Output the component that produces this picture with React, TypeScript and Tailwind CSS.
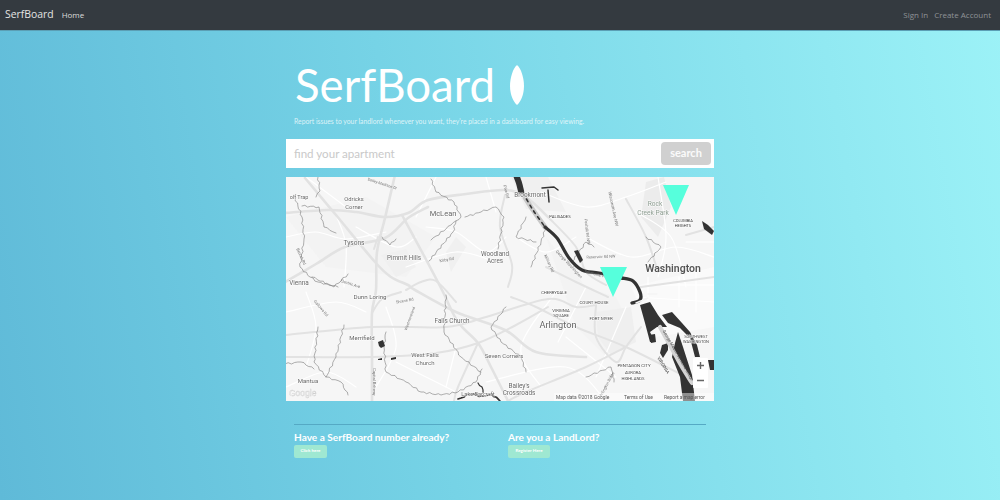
import React from "react";

function nums(d: string): [number, number][] {
  const n = (d.match(/-?\d+(\.\d+)?/g) ?? []).map(Number);
  const out: [number, number][] = [];
  for (let i = 0; i + 1 < n.length; i += 2) out.push([n[i], n[i + 1]]);
  return out;
}
function smooth(d: string) {
  const p = nums(d);
  let s = `M${p[0][0]} ${p[0][1]}`;
  for (let i = 0; i < p.length - 1; i++) {
    const a = p[Math.max(i - 1, 0)], b = p[i], c = p[i + 1], e = p[Math.min(i + 2, p.length - 1)];
    s += ` C${b[0] + (c[0] - a[0]) / 6} ${b[1] + (c[1] - a[1]) / 6} ${c[0] - (e[0] - b[0]) / 6} ${c[1] - (e[1] - b[1]) / 6} ${c[0]} ${c[1]}`;
  }
  return s;
}
function wiggle(d: string, seed: number) {
  const p = nums(d);
  let s = `M${p[0][0]} ${p[0][1]}`;
  let k = seed;
  for (let i = 0; i < p.length - 1; i++) {
    const [x0, y0] = p[i], [x1, y1] = p[i + 1];
    const len = Math.hypot(x1 - x0, y1 - y0);
    const steps = Math.max(1, Math.round(len / 3));
    for (let j = 1; j <= steps; j++) {
      k += 1.7;
      const t = j / steps;
      const off = j === steps ? 0 : Math.sin(k * 2.3) * 0.9;
      const x = x0 + (x1 - x0) * t + (-(y1 - y0) / len) * off;
      const y = y0 + (y1 - y0) * t + ((x1 - x0) / len) * off;
      s += ` L${x.toFixed(1)} ${y.toFixed(1)}`;
    }
  }
  return s;
}

const major = [
  "M-1 36 L42 33 L70 35 L99 40 L122 36 L142 23 L180 17 L219 13 L240 20 L262 40",
  "M19 1 L50 38 L89 85 L105 100 L122 108 L129 113 L170 135 L219 153 L250 175 L300 180",
  "M109 -2 L99 41 L91 75 L90 113 L86 136 L86 180 L86 224",
  "M-1 105 L30 87 L59 70 L99 61 L122 41 L142 30",
  "M116 38 L136 75 L156 113 L172 145 L192 166 L205 190 L222 224",
  "M-1 158 L86 150 L160 150 L200 140 L262 122 L290 130 L310 128",
  "M-1 180 L86 180 L150 176 L192 166 L230 148 L262 130",
  "M120 113 L135 105 L150 104 L170 125",
  "M192 166 L172 210 L168 224",
  "M262 40 L290 70 L300 95 L320 108",
  "M225 120 L250 130 L290 150 L340 170 L400 200",
  "M340 170 L300 190 L240 215 L222 224",
  "M310 128 L310 160 L330 185 L340 170 L355 150",
  "M355 110 L428 100",
  "M400 58 L428 50",
  "M219 18 L214 50 L226 88 L222 110",
  "M260 90 L290 105 L322 120",
  "M92 60 L88 72",
  "M340 22 L360 60 L372 95",
];
const minor = [
  "M0 60 L30 55 L60 62 L100 55", "M50 38 L60 68 L58 110", "M70 50 L110 70 L130 60",
  "M120 90 L170 75 L210 85", "M140 50 L170 55 L200 75 L220 60", "M0 135 L50 125 L80 135",
  "M20 115 L30 150 L20 190", "M100 130 L110 170 L90 210", "M170 170 L160 210", "M230 60 L260 75 L290 60",
  "M255 15 L300 30 L340 20 L380 5", "M300 60 L345 80 L390 70 L428 80", "M350 35 L385 60 L400 110", "M372 0 L380 60 L372 100",
  "M350 120 L428 125", "M362 100 L362 150", "M393 100 L393 130", "M410 95 L410 135", "M270 115 L235 170 L255 210",
  "M280 160 L330 200", "M300 110 L272 165", "M20 0 L60 30", "M150 0 L130 40", "M200 0 L210 35", "M340 130 L310 200",
  "M400 65 L428 65", "M375 108 L428 108", "M0 210 L40 195 L70 210", "M110 185 L140 200 L170 215", "M200 205 L280 190 L320 224",
];
const creek = [
  "M8 18 L16 40 L18 62 L14 90 L24 100 L32 105 L52 110",
  "M16 29 L33 30 L38 50 L50 56",
  "M26 100 L48 110 L62 97",
  "M145 63 L165 48 L175 40 L168 25 L150 15 L145 2",
  "M179 40 L195 35 L210 30 L218 40 L212 72",
  "M143 84 L167 55 L170 44",
  "M32 0 L34 14 L30 20",
  "M96 60 L104 68 L110 62",
  "M100 155 L98 170 L100 195 L120 205 L135 215 L155 218 L172 215 L190 205 L196 192",
  "M32 150 L28 185 L40 200 L55 205 L62 218",
  "M58 148 L50 180 L40 200",
  "M-1 187 L15 185 L28 192",
  "M160 118 L158 155 L175 180 L195 195",
  "M240 40 L230 60 L250 65",
  "M245 90 L255 65 L260 50",
  "M286 85 L300 65 L308 70",
  "M360 60 L375 70 L362 85",
  "M220 130 L205 150 L215 165 L235 180 L240 195",
  "M300 200 L325 190 L328 205",
];
const blobs = [
  "M288 74 L292 73 L297 83 L294 86 Z",
  "M354 128 L364 125 L372 138 L381 150 L371 150 L364 155 L369 165 L364 165 L359 146 Z",
  "M376 138 L386 135 L396 146 L404 155 L411 168 L414 180 L409 180 L404 161 L394 151 L382 146 Z",
  "M392 155 L397 170 L406 198 L409 224 L397 224 L394 200 L386 180 L389 166 Z",
  "M376 168 L382 166 L382 173 L377 181 L374 176 Z",
  "M363 158 L369 157 L370 165 L365 166 Z",
  "M422 183 L428 183 L428 193 L424 193 Z",
  "M416 44 L422 48 L428 54 L426 58 L418 52 Z",
  "M92 165 L97 163 L99 169 L95 171 L93 169 Z",
  "M105 181 L110 180 L110 182 L105 183 Z",
  "M92 182 L96 181 L96 183 L92 183 Z",
];
type L = [string, number, number, number, string?, number?, number?];
const labels: L[] = [
  ["Odricks", 68, 24, 5.8], ["Corner", 68, 32, 5.8], ["McLean", 157, 39, 7.5], ["Tysons", 68, 68, 6.6],
  ["Pimmit Hills", 118, 83, 6.3], ["Woodland", 209, 79, 6.3], ["Acres", 209, 86, 6.3], ["Vienna", 13, 108, 6.4],
  ["olf Trap", 13, 22, 5.5], ["Dunn Loring", 84, 122, 6.2], ["Falls Church", 166, 146, 6.4], ["Merrifield", 76, 163, 6],
  ["West Falls", 139, 180, 6], ["Church", 139, 188, 6], ["Seven Corners", 218, 181, 6], ["Mantua", 22, 206, 6],
  ["Lake Barcroft", 192, 219, 5.6], ["Bailey's", 233, 211, 6.4], ["Crossroads", 233, 218, 6.4],
  ["Arlington", 272, 151, 9.2], ["Washington", 387, 95, 10.5, "#555", 600], ["CHERRYDALE", 268, 117, 4.2, "#444"],
  ["COURT HOUSE", 308, 127, 4.4, "#444"], ["VIRGINIA", 275, 135, 4.2, "#444"], ["SQUARE", 275, 140, 4.2, "#444"],
  ["FORT MYER", 315, 143, 4.4, "#444"], ["PENTAGON CITY", 348, 190, 4.4, "#444"], ["AURORA", 347, 197, 4.2, "#444"], ["HIGHLANDS", 347, 203, 4.2, "#444"],
  ["SOUTHWEST", 410, 161, 4, "#444"], ["WASHINGTON", 410, 166, 4, "#444"], ["PALISADES", 274, 41, 4.2, "#333"],
  ["COLUMBIA", 397, 45, 4, "#333"], ["HEIGHTS", 397, 50, 4, "#333"], ["Brookmont", 244, 20, 6.4],
  ["Rock", 369, 29, 6.6, "#8a9a8e"], ["Creek Park", 367, 38, 6.6, "#8a9a8e"],
];
const rotated: L[] = [
  ["Dolley Madison Dr", 96, 8, 3.8, "#777", 400, 18], ["Beulah Rd", 14, 80, 4, "#777", 400, 65], ["Electric Ave", 64, 108, 4, "#777", 400, 18],
  ["Kirby Rd", 161, 84, 4, "#777", 400, -10], ["Shreve Rd", 119, 125, 4, "#777", 400, -10], ["Gallows Rd", 34, 132, 4, "#777", 400, 50],
  ["Westmoreland", 125, 142, 3.8, "#777", 400, -70], ["Capital Beltway", 87, 205, 4, "#777", 400, 90], ["Wisconsin Ave NW", 326, 32, 4.2, "#777", 400, 78],
  ["Foxhall Rd NW", 300, 55, 4, "#777", 400, 83], ["Reservoir Rd NW", 315, 81, 3.9, "#777", 400, -2], ["George Washington", 282, 88, 4.2, "#777", 400, 47],
  ["Memorial Pkwy", 312, 99, 4, "#777", 400, 14], ["Military Rd", 262, 87, 4, "#777", 400, 65], ["VIRGINIA", 376, 189, 4.6, "#555", 400, 58],
  ["George Mason Memorial Bridge", 391, 179, 4.1, "#444", 400, 60], ["Arlington Ridge", 322, 208, 4, "#777", 400, -62], ["Pike Rd", 219, 15, 4, "#777", 400, 75],
];

function MapPanel() {
  return (
    <div className="relative h-[224px] w-full overflow-hidden bg-[#f6f6f6]">
      <svg viewBox="0 0 428 224" className="block h-full w-full blur-[0.45px]" fill="none" strokeLinejoin="round" strokeLinecap="round" fontFamily="Roboto, sans-serif">
        <path d="M0 40 L80 20 L150 60 L120 100 L40 90 Z M260 60 L300 110 L330 120 L345 150 L320 180 L290 150 Z" fill="#f3f3f3" />
        <path d="M345 110 L428 90 L428 150 L370 160 Z" fill="#fafafa" />
        <path d="M310 135 L345 130 L350 165 L325 178 L312 160 Z" fill="#efefef" />
        <path d="M360 5 L378 0 L385 30 L372 60 L355 40 Z" fill="#ececec" />
        <path d="M95 78 L120 72 L130 90 L110 100 Z M225 0 L262 0 L280 35 L240 32 Z M170 60 L180 70 L165 95 L160 75 Z" fill="#f0f0f0" />
        {minor.map((d, i) => <path key={i} d={smooth(d)} stroke="#ffffff" strokeWidth="1.2" />)}
        {major.map((d, i) => <path key={i} d={smooth(d)} stroke="#e2e2e2" strokeWidth={i < 5 ? 2.6 : 2} />)}
        <path d={smooth("M86 136 L96 122 L115 115")} stroke="#e2e2e2" strokeWidth="2" />
        {creek.map((d, i) => <path key={i} d={wiggle(d, i * 3)} stroke="#6f6f6f" strokeWidth="0.55" />)}
        <path d={wiggle("M172 222 L184 217 L196 219 L206 217 L214 224", 5)} stroke="#333" strokeWidth="1.7" />
        <path d={wiggle("M192 206 L196 210 L197 216", 2)} stroke="#333" strokeWidth="1.2" />
        <path d={smooth("M232 0 L236 15 L247 33 L259 50")} stroke="#c9c9c9" strokeWidth="5" />
        <path d={smooth("M230 -2 L233 6 L235 14")} stroke="#333" strokeWidth="6" />
        <path d={smooth("M237 16 L247 33 L259 50")} stroke="#333" strokeWidth="1.6" strokeDasharray="3 4" />
        <path d={smooth("M259 50 L271 61 L283 81 L296 93 L313 96 L336 101")} stroke="#333" strokeWidth="3.2" />
        <path d={smooth("M336 101 L347 104 L354 115 L354 123 L346 126")} stroke="#333" strokeWidth="3.4" />
        <path d="M256 11 L268 10 L272 13 M262 13 L263 25" stroke="#333" strokeWidth="1.5" />
        {blobs.map((d, i) => <path key={i} d={d} fill="#333" />)}
        <path d={smooth("M374 150 L385 170 L396 190 L406 206")} stroke="#d4d4d4" strokeWidth="4.2" />
        <path d="M350 126 L362 121 M362 117 h9" stroke="#f5f5f5" strokeWidth="1.4" />
        {labels.map(([t, x, y, s, c, w]) => (
          <text key={t + x} x={x} y={y} fontSize={s} fontWeight={w ?? 400} fill={c ?? "#666"} stroke="#ffffff" strokeWidth="0.8" paintOrder="stroke" textAnchor="middle">{t}</text>
        ))}
        {rotated.map(([t, x, y, s, c, w, r]) => (
          <text key={t} x={x} y={y} fontSize={s} fontWeight={w ?? 400} fill={c ?? "#777"} textAnchor="middle" transform={`rotate(${r} ${x} ${y})`}>{t}</text>
        ))}
        <text x="3" y="219" fontSize="8.5" fill="#ffffff" stroke="#cfcfcf" strokeWidth="0.4" fontFamily="'Liberation Sans', sans-serif">Google</text>
        <rect x="268" y="216" width="160" height="8" fill="#ffffff" fillOpacity="0.45" />
        <text x="270" y="222" fontSize="4.9" fill="#555">Map data ©2018 Google</text>
        <text x="338" y="222" fontSize="4.9" fill="#555">Terms of Use</text>
        <text x="378" y="222" fontSize="4.9" fill="#555">Report a map error</text>
        <path d="M377 8 H403 L390 38 Z M314 90 H341 L327 120 Z" fill="#56ffdc" />
        <rect x="407" y="181" width="15" height="30" rx="1" fill="#ffffff" />
        <path d="M414.5 185 v7 M411 188.5 h7 M411 203.5 h7" stroke="#666" strokeWidth="1.4" strokeLinecap="butt" />
      </svg>
    </div>
  );
}

export default function App() {
  return (
    <div className="flex h-[500px] w-[1000px] flex-col overflow-hidden bg-[linear-gradient(80deg,#5fbad8_0%,#76d3e6_42%,#9cf2f7_100%)] font-['Lato','Open_Sans',sans-serif] text-white">
      <nav className="flex h-[30px] shrink-0 items-center bg-[#343a40] pl-[5px] pr-[9px] shadow-[0_1px_0_#5b9fb5]">
        <span className="font-['Open_Sans',sans-serif] text-[10.4px] text-[#e4e4e4]">SerfBoard</span>
        <span className="ml-[8px] font-['Open_Sans',sans-serif] text-[8px] text-[#dcdcdc]">Home</span>
        <div className="ml-auto flex gap-[6px] font-['Open_Sans',sans-serif] text-[8px] text-[#8f9397]">
          <span>Sign In</span>
          <span>Create Account</span>
        </div>
      </nav>
      <main className="mx-auto flex w-[428px] flex-col">
        <div className="flex items-center pl-[9px] pt-[32px]">
          <h1 className="text-[45.6px] leading-[46px] text-white">SerfBoard</h1>
          <svg viewBox="0 0 16 40" className="ml-[14px] h-[40px] w-[16px]" aria-hidden="true">
            <path d="M8 0 C12 3 15 13 15 21 C15 30 11.5 37 8 40 C4.5 37 1 30 1 21 C1 13 4 3 8 0 Z" fill="#ffffff" />
          </svg>
        </div>
        <p className="mt-[8px] pl-[8px] text-[6.8px] leading-[10px] text-white/75">Report issues to your landlord whenever you want, they're placed in a dashboard for easy viewing.</p>
        <div className="mt-[13px] flex h-[29px] items-center bg-white pl-[8px] pr-[3px]">
          <span className="text-[11.6px] text-[#c9c9c9]">find your apartment</span>
          <span className="ml-auto flex h-[23px] w-[50px] items-center justify-center rounded-[4px] bg-[#d0d0d0] text-[11px] font-bold text-white/90">search</span>
        </div>
        <div className="mt-[9px]">
          <MapPanel />
        </div>
        <div className="mx-[8px] mt-[23px] grid grid-cols-[214px_1fr] border-t border-[#55a9c4] pt-[5px]">
          <div className="flex flex-col items-start">
            <h2 className="text-[10.1px] font-bold leading-[14px]">Have a SerfBoard number already?</h2>
            <span className="mt-[1px] flex h-[13px] w-[33px] items-center justify-center rounded-[2px] bg-[#9fe8d2] text-[4.5px] font-bold">Click here</span>
          </div>
          <div className="flex flex-col items-start">
            <h2 className="text-[10.1px] font-bold leading-[14px]">Are you a LandLord?</h2>
            <span className="mt-[1px] flex h-[13px] w-[42px] items-center justify-center rounded-[2px] bg-[#9fe8d2] text-[4.5px] font-bold">Register Here</span>
          </div>
        </div>
      </main>
    </div>
  );
}
